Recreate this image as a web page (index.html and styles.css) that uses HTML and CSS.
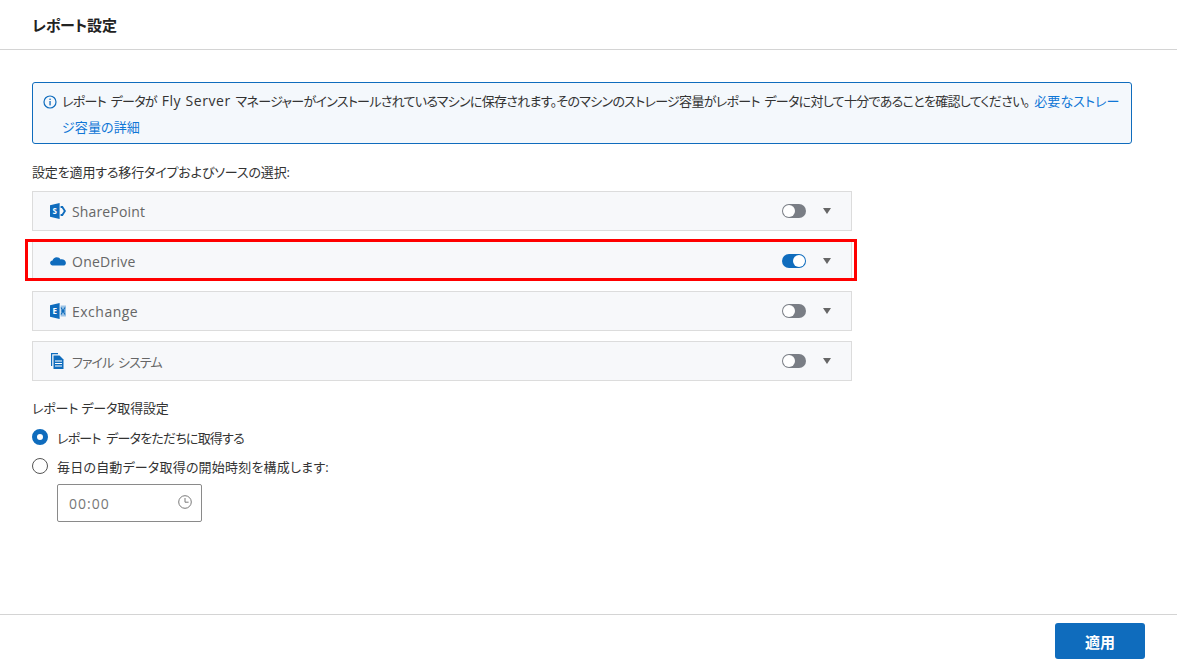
FILE: index.html
```html
<!DOCTYPE html>
<html lang="ja">
<head>
<meta charset="utf-8">
<title>レポート設定</title>
<link rel="stylesheet" href="styles.css">
</head>
<body>
<div class="page">
  <header class="header"><h1 class="title">レポート設定</h1></header>
  <main class="content">
    <div class="notice">
      <svg class="notice-icon" viewBox="0 0 14 14" width="14" height="14"><circle cx="7" cy="7" r="6" fill="none" stroke="#0f6cbd" stroke-width="1.2"/><rect x="6.400" y="6" width="1.300" height="4.400" fill="#0f6cbd"/><rect x="6.400" y="3.600" width="1.300" height="1.400" fill="#0f6cbd"/></svg>
      <p class="notice-text">レポート データが <span class="latin">Fly Server</span> マネージャーがインストールされているマシンに保存されます。そのマシンのストレージ容量がレポート データに対して十分であることを確認してください。 <a class="link">必要なストレージ容量の詳細</a></p>
    </div>
    <p class="label">設定を適用する移行タイプおよびソースの選択:</p>
    <div class="rows">
      <div class="row">
        <svg class="row-icon" viewBox="0 0 16 16" width="16" height="16"><path d="M0 2.200 9.600 0v16L0 13.800z" fill="#0f6cbd"/><path d="M10.600 3h2.200L16 8l-3.200 5h-2.200v-2h1.300l1.900-3-1.900-3h-1.300z" fill="#0f6cbd"/><text x="2.400" y="11" class="icon-letter">S</text></svg>
        <span class="row-name">SharePoint</span>
        <span class="toggle"><span class="knob"></span></span>
        <span class="caret"></span>
      </div>
      <div class="row">
        <svg class="row-icon" viewBox="0 0 16 16" width="16" height="16"><path d="M4 12.600C1.600 12.600.1 11.600.1 10c0-1.300 1-2.200 2.400-2.400C3 5.600 4.600 4.200 6.800 4.200c1.700 0 3 .8 3.800 2.200 2.800-.5 5.300 1.100 5.300 3.600 0 1.600-1.200 2.600-3 2.600z" fill="#0f6cbd"/></svg>
        <span class="row-name row-name-mid">OneDrive</span>
        <span class="toggle toggle-on"><span class="knob"></span></span>
        <span class="caret"></span>
        <span class="highlight"></span>
      </div>
      <div class="row">
        <svg class="row-icon" viewBox="0 0 16 16" width="16" height="16"><path d="M0 2.200 9.600 0v16L0 13.800z" fill="#0f6cbd"/><path d="M10.600 2.500H16v11h-5.400z" fill="#9cc3e5"/><path d="M11 4.500l4 7M15 4.500l-4 7M11 8h4" stroke="#0f6cbd" stroke-width="1.100"/><text x="2.600" y="11" class="icon-letter">E</text></svg>
        <span class="row-name row-name-wide">Exchange</span>
        <span class="toggle"><span class="knob"></span></span>
        <span class="caret"></span>
      </div>
      <div class="row">
        <svg class="row-icon" viewBox="0 0 16 16" width="16" height="16"><path d="M1 0h7v1.200H2.200V13H1z" fill="#0f6cbd"/><path d="M3.500 2.500h6l4 4V16h-10z" fill="#0f6cbd"/><path d="M5 8h7M5 10.500h7M5 13h7" stroke="#fff" stroke-width="1"/></svg>
        <span class="row-name row-name-jp">ファイル システム</span>
        <span class="toggle"><span class="knob"></span></span>
        <span class="caret"></span>
      </div>
    </div>
    <p class="label label-schedule">レポート データ取得設定</p>
    <div class="radio-line radio-line-first"><span class="radio radio-on"></span><span>レポート データをただちに取得する</span></div>
    <div class="radio-line radio-line-second"><span class="radio"></span><span>毎日の自動データ取得の開始時刻を構成します:</span></div>
    <div class="time">
      <span class="time-value">00:00</span>
      <svg viewBox="0 0 14 14" width="14" height="14"><circle cx="7" cy="7" r="6.300" fill="none" stroke="#7a7a7a" stroke-width="1"/><path d="M7 3v4.200h3.600" fill="none" stroke="#7a7a7a" stroke-width="1"/></svg>
    </div>
  </main>
  <footer class="footer"><button class="apply">適用</button></footer>
</div>
</body>
</html>
```
FILE: styles.css
```css
* { box-sizing: border-box; }
html, body { margin: 0; padding: 0; background: #fff; }
body {
  font-family: "Open Sans", "Noto Sans CJK JP", sans-serif;
  font-size: 13px;
  color: #333;
  font-feature-settings: "palt";
}
.page { width: 1177px; height: 667px; display: flex; flex-direction: column; overflow: hidden; }
.header { height: 50px; border-bottom: 1px solid #d4d4d4; padding: 0 32px; display: flex; align-items: center; flex: none; }
.title { margin: 0; font-size: 15px; font-weight: 700; color: #222; letter-spacing: -.15px; }
.content { flex: 1; padding: 32px 45px 0 32px; }
.notice { height: 62px; border: 1px solid #0f6cbd; border-radius: 3px; background: #f4f8fc; padding: 5px 8px 5px 10px; display: flex; gap: 5px; align-items: flex-start; }
.notice-icon { flex: none; margin-top: 7px; }
.notice-text { margin: 0; line-height: 26px; word-break: break-all; letter-spacing: -.7px; word-spacing: 2px; }
.latin { font-size: 14px; letter-spacing: .6px; word-spacing: 0; }
.link { color: #0f76d6; letter-spacing: .1px; }
.label { margin: 0; line-height: 20px; letter-spacing: -.15px; }
.notice + .label { margin-top: 18px; }
.rows { margin-top: 9px; width: 820px; display: flex; flex-direction: column; gap: 10px; }
.row { position: relative; height: 40px; background: #f7f8fa; border: 1px solid #dcdcdc; display: flex; align-items: center; padding: 0 20px 0 17px; }
.row-icon { flex: none; }
.row-name { margin-left: 6px; flex: 1; color: #666; font-size: 14px; letter-spacing: .15px; }
.row-name-mid { letter-spacing: .25px; }
.row-name-wide { letter-spacing: .5px; }
.row-name-jp { font-size: 13px; letter-spacing: -.9px; word-spacing: 2px; }
.icon-letter { font-size: 8px; font-weight: 700; fill: #fff; font-family: "Open Sans", sans-serif; }
.toggle { width: 24px; height: 14px; border-radius: 7px; background: #7a7e85; position: relative; display: flex; align-items: center; padding: 0 2px; }
.knob { width: 12px; height: 12px; border-radius: 50%; background: #fff; margin-left: -1px; }
.toggle-on { background: #0f6cbd; justify-content: flex-end; }
.toggle-on .knob { margin: 0 -1px 0 0; }
.caret { margin: 0 0 0 17px; width: 0; height: 0; border-left: 4.500px solid transparent; border-right: 4.500px solid transparent; border-top: 6px solid #666; }
.highlight { position: absolute; left: -8px; right: -6px; top: -3px; bottom: -1px; border: 3px solid #f00; pointer-events: none; }
.label-schedule { margin-top: 17px; }
.radio-line { display: flex; align-items: center; gap: 9px; height: 28px; }
.radio-line-first { margin-top: 5px; letter-spacing: -.8px; word-spacing: 3px; }
.radio-line-second { margin-top: 1px; letter-spacing: .2px; }
.radio { width: 16px; height: 16px; border-radius: 50%; border: 1px solid #555; background: #fff; flex: none; }
.radio-on { border: 5px solid #0f6cbd; }
.time { width: 145px; height: 38px; margin: 4px 0 0 25px; border: 1px solid #8a8a8a; border-radius: 2px; display: flex; align-items: center; justify-content: space-between; padding: 1px 9px 0 11px; }
.time-value { color: #777; font-size: 14px; letter-spacing: 1px; }
.time svg { margin-top: -3px; }
.footer { height: 53px; flex: none; border-top: 1px solid #d4d4d4; padding: 8px 32px 0 0; display: flex; justify-content: flex-end; align-items: flex-start; }
.apply { width: 90px; height: 36px; border: 0; border-radius: 3px; background: #0f6cbd; color: #fff; font: 700 15px "Open Sans", "Noto Sans CJK JP", sans-serif; }
```
